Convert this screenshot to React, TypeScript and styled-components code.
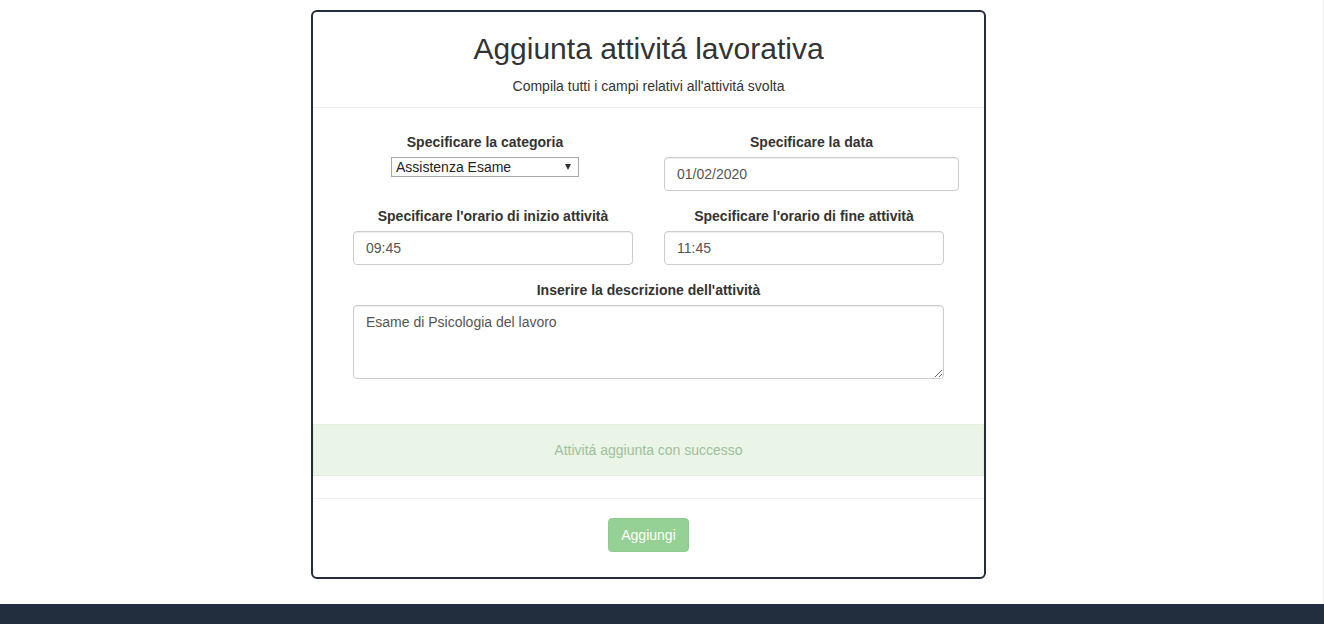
import React from "react";
import styled, { createGlobalStyle } from "styled-components";

const GlobalStyle = createGlobalStyle`
  html, body {
    margin: 0;
    padding: 0;
    background: #ffffff;
    font-family: "Liberation Sans", Arial, Helvetica, sans-serif;
    font-size: 14px;
    line-height: 20px;
    color: #333333;
  }
  * { box-sizing: border-box; }
`;

const Page = styled.div`
  display: flex;
  flex-direction: column;
`;

const Main = styled.main`
  padding: 10px 26px 25px 0;
  border-right: 1px solid #ececec;
`;

const Card = styled.section`
  width: 675px;
  margin: 0 auto;
  border: 2px solid #222c3b;
  border-radius: 6px;
  background: #fff;
  display: flex;
  flex-direction: column;
`;

const Header = styled.header`
  padding: 20px 0 11px;
  border-bottom: 1px solid #f0f0f0;
  text-align: center;
`;

const Title = styled.h2`
  margin: 0;
  font-size: 30px;
  line-height: 33px;
  font-weight: 400;
  color: #333;
`;

const Subtitle = styled.p`
  margin: 11px 0 0;
  font-size: 14px;
  line-height: 20px;
  color: #333;
`;

const Body = styled.div`
  padding: 24px 0 0;
  display: flex;
  flex-direction: column;
`;

const FormGrid = styled.div`
  width: 591px;
  margin: 0 auto;
  display: grid;
  grid-template-columns: 280px 280px;
  column-gap: 31px;
  row-gap: 15px;
  align-items: start;
`;

const Field = styled.div<{ $width?: number; $offset?: number; $span?: boolean }>`
  display: flex;
  flex-direction: column;
  width: ${(p) => (p.$width ? `${p.$width}px` : "100%")};
  margin-left: ${(p) => p.$offset ?? 0}px;
  grid-column: ${(p) => (p.$span ? "1 / -1" : "auto")};
`;

const Label = styled.label`
  display: block;
  margin-bottom: 5px;
  font-weight: 700;
  font-size: 14px;
  line-height: 20px;
  text-align: center;
  color: #333;
  white-space: nowrap;
`;

const SelectWrap = styled.div`
  position: relative;
  width: 100%;
  height: 20px;
`;

const Select = styled.select`
  appearance: none;
  -webkit-appearance: none;
  width: 100%;
  height: 20px;
  margin: 0;
  padding: 0 18px 0 4px;
  border: 1px solid #a9a9a9;
  border-radius: 0;
  background: #fff;
  font-family: "Liberation Sans", Arial, sans-serif;
  font-size: 14px;
  line-height: 18px;
  color: #222;
`;

const SelectArrow = styled.span`
  position: absolute;
  right: 8px;
  top: 7px;
  width: 0;
  height: 0;
  border-left: 3px solid transparent;
  border-right: 3px solid transparent;
  border-top: 6px solid #333;
  pointer-events: none;
`;

const Input = styled.input`
  display: block;
  width: 100%;
  height: 34px;
  padding: 6px 12px;
  border: 1px solid #ccc;
  border-radius: 4px;
  box-shadow: inset 0 1px 1px rgba(0, 0, 0, 0.075);
  font-family: "Liberation Sans", Arial, sans-serif;
  font-size: 14px;
  line-height: 20px;
  color: #555;
  background: #fff;
`;

const TextArea = styled.textarea`
  display: block;
  width: 100%;
  height: 74px;
  padding: 6px 12px;
  border: 1px solid #ccc;
  border-radius: 4px;
  box-shadow: inset 0 1px 1px rgba(0, 0, 0, 0.075);
  font-family: "Liberation Sans", Arial, sans-serif;
  font-size: 14px;
  line-height: 20px;
  color: #555;
  background: #fff;
  resize: vertical;
`;

const Alert = styled.div`
  margin-top: 45px;
  padding: 15px;
  border: 1px solid #e3f0dc;
  background: #eaf4e7;
  color: #9cc29a;
  text-align: center;
  font-size: 14px;
  line-height: 20px;
`;

const Footer = styled.div`
  margin-top: 22px;
  border-top: 1px solid #f0f0f0;
  padding: 19px 0 25px;
  display: flex;
  justify-content: center;
`;

const Button = styled.button`
  height: 34px;
  padding: 6px 12px;
  border: 1px solid #8fcb8f;
  border-radius: 4px;
  background: #95d195;
  color: #fff;
  font-family: "Liberation Sans", Arial, sans-serif;
  font-size: 14px;
  line-height: 20px;
  font-weight: 400;
  cursor: not-allowed;
`;

const SiteFooter = styled.footer`
  height: 20px;
  background: #222d3e;
`;

export default function App() {
  return (
    <>
      <GlobalStyle />
      <Page>
        <Main>
          <Card>
            <Header>
              <Title>Aggiunta attivitá lavorativa</Title>
              <Subtitle>Compila tutti i campi relativi all'attivitá svolta</Subtitle>
            </Header>
            <Body>
              <FormGrid>
                <Field $width={188} $offset={38}>
                  <Label>Specificare la categoria</Label>
                  <SelectWrap>
                    <Select defaultValue="esame">
                      <option value="esame">Assistenza Esame</option>
                    </Select>
                    <SelectArrow />
                  </SelectWrap>
                </Field>
                <Field $width={295}>
                  <Label>Specificare la data</Label>
                  <Input type="text" defaultValue="01/02/2020" />
                </Field>
                <Field>
                  <Label>Specificare l'orario di inizio attività</Label>
                  <Input type="text" defaultValue="09:45" />
                </Field>
                <Field>
                  <Label>Specificare l'orario di fine attività</Label>
                  <Input type="text" defaultValue="11:45" />
                </Field>
                <Field $span>
                  <Label>Inserire la descrizione dell'attività</Label>
                  <TextArea defaultValue="Esame di Psicologia del lavoro" />
                </Field>
              </FormGrid>
              <Alert>Attivitá aggiunta con successo</Alert>
            </Body>
            <Footer>
              <Button type="button">Aggiungi</Button>
            </Footer>
          </Card>
        </Main>
        <SiteFooter />
      </Page>
    </>
  );
}
